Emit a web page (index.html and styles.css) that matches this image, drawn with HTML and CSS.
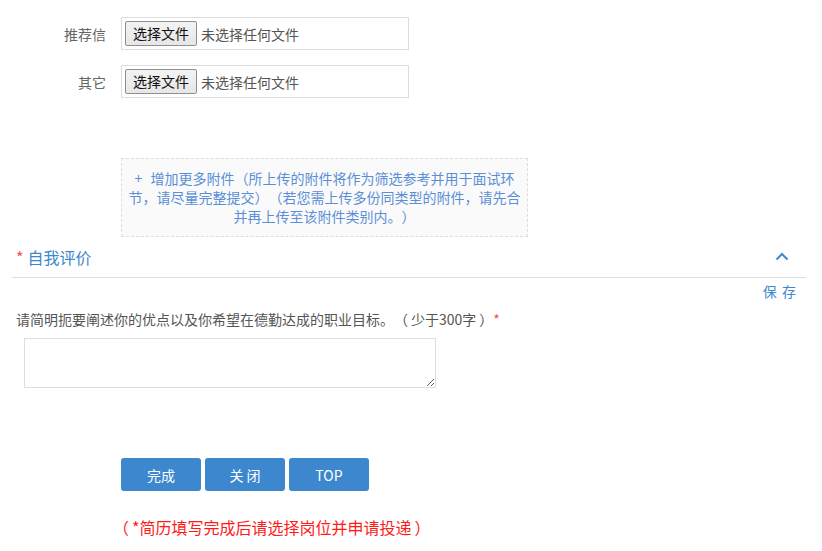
FILE: index.html
```html
<!DOCTYPE html>
<html lang="zh">
<head>
<meta charset="utf-8">
<link rel="stylesheet" href="styles.css">
</head>
<body>
<div class="page">
  <div class="row">
    <div class="label">推荐信</div>
    <div class="filebox"><span class="filebtn">选择文件</span><span class="filename">未选择任何文件</span></div>
  </div>
  <div class="row">
    <div class="label">其它</div>
    <div class="filebox"><span class="filebtn">选择文件</span><span class="filename">未选择任何文件</span></div>
  </div>
  <div class="more">
    <span class="plus">+</span>增加更多附件（所上传的附件将作为筛选参考并用于面试环<br>节，请尽量完整提交）（若您需上传多份同类型的附件，请先合<br>并再上传至该附件类别内。）
  </div>
  <div class="section-head">
    <div class="title"><span class="star">*</span>自我评价</div>
    <svg class="chevron" width="14" height="9" viewBox="0 0 14 9"><path d="M1.5 7.5 L7 2 L12.5 7.5" fill="none" stroke="#3d87cf" stroke-width="2"/></svg>
  </div>
  <div class="save-row"><span class="save">保 存</span></div>
  <div class="desc">请简明扼要阐述你的优点以及你希望在德勤达成的职业目标。<span class="pl">（</span>少于300字<span class="pr">）</span><span class="star">*</span></div>
  <textarea class="area"></textarea>
  <div class="buttons">
    <button class="btn">完成</button>
    <button class="btn">关 闭</button>
    <button class="btn">TOP</button>
  </div>
  <div class="notice"><span class="pl">（</span>*简历填写完成后请选择岗位并申请投递<span class="pr">）</span></div>
</div>
</body>
</html>
```
FILE: styles.css
```css
html, body {
  margin: 0;
  padding: 0;
  background: #fff;
}
body {
  font-family: "Noto Sans CJK SC", "Microsoft YaHei", sans-serif;
  font-size: 14px;
  color: #555;
  text-spacing-trim: space-all;
}
.page {
  padding-top: 17px;
  display: flow-root;
}
.row {
  display: flex;
  align-items: center;
  margin-bottom: 15px;
}
.label {
  width: 106px;
  margin-right: 15px;
  text-align: right;
  color: #666;
  font-size: 14px;
}
.filebox {
  box-sizing: border-box;
  width: 288px;
  height: 33px;
  border: 1px solid #ddd;
  padding: 3px;
  display: flex;
  align-items: center;
}
.filebtn {
  box-sizing: border-box;
  height: 25px;
  width: 72px;
  border: 1px solid #8f8f8f;
  border-radius: 2px;
  background: linear-gradient(#f3f3f3, #e6e6e6);
  color: #111;
  font-size: 14px;
  line-height: 23px;
  text-align: center;
}
.filename {
  margin-left: 4px;
  color: #555;
  font-size: 14px;
}
.more {
  box-sizing: border-box;
  margin: 60px 0 0 121px;
  width: 407px;
  height: 79px;
  border: 1px dashed #ddd;
  background: #fafafa;
  padding: 10px 0 0;
  text-align: center;
  color: #5a8fd8;
  font-size: 14px;
  line-height: 19px;
  white-space: nowrap;
}
.plus {
  margin-right: 8px;
}
.section-head {
  margin: 0 16px 0 12px;
  height: 40px;
  border-bottom: 1px solid #ddd;
  display: flex;
  align-items: center;
  justify-content: space-between;
  padding: 0 17px 0 4px;
}
.title {
  color: #3d87cf;
  font-size: 16px;
}
.star {
  color: #f05050;
  margin-right: 4px;
}
.chevron {
  display: block;
  margin-top: -2px;
}
.save-row {
  display: flex;
  justify-content: flex-end;
  padding: 3px 25px 0 0;
  height: 22px;
}
.save {
  color: #3d87cf;
  font-size: 14px;
  letter-spacing: 1px;
}
.desc {
  margin: 6px 0 0 16px;
  font-size: 14px;
  color: #555;
  line-height: 20px;
}
.desc .star {
  margin: 0;
}
.pl {
  margin-right: 3px;
}
.pr {
  margin-left: 3px;
}
.area {
  display: block;
  box-sizing: border-box;
  margin: 9px 0 0 24px;
  width: 412px;
  height: 50px;
  border: 1px solid #ddd;
  resize: vertical;
}
.buttons {
  display: flex;
  gap: 4px;
  margin: 70px 0 0 121px;
}
.btn {
  width: 80px;
  height: 33px;
  border: none;
  border-radius: 3px;
  background: #3d87cf;
  color: #fff;
  font-family: "Noto Sans CJK SC", sans-serif;
  font-size: 14px;
  padding: 0;
}
.notice {
  margin: 24px 0 0 113px;
  color: #ff1a1a;
  font-size: 16px;
  line-height: 24px;
}
```
